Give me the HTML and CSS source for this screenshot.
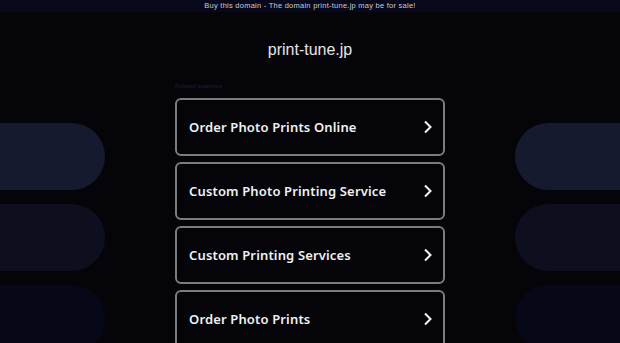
FILE: index.html
```html
<!DOCTYPE html>
<html lang="en">

<head>
    <meta charset="UTF-8">
    <meta name="viewport" content="width=device-width, initial-scale=1.0">
    <title>print-tune.jp</title>
    <link rel="stylesheet" href="styles.css">
</head>

<body>
    <div class="topbar">Buy this domain - The domain print-tune.jp may be for sale!</div>
    <div class="page">
        <div class="side left">
            <div class="pill p1"></div>
            <div class="pill p2"></div>
            <div class="pill p3"></div>
        </div>
        <div class="main">
            <h1 class="domain">print-tune.jp</h1>
            <div class="related">Related searches</div>
            <div class="links">
                <a class="link" href="#">
                    <span>Order Photo Prints Online</span>
                    <svg viewBox="0 0 10 14"><polyline points="2,1.5 7.5,7 2,12.5"></polyline></svg>
                </a>
                <a class="link" href="#">
                    <span>Custom Photo Printing Service</span>
                    <svg viewBox="0 0 10 14"><polyline points="2,1.5 7.5,7 2,12.5"></polyline></svg>
                </a>
                <a class="link" href="#">
                    <span>Custom Printing Services</span>
                    <svg viewBox="0 0 10 14"><polyline points="2,1.5 7.5,7 2,12.5"></polyline></svg>
                </a>
                <a class="link" href="#">
                    <span>Order Photo Prints</span>
                    <svg viewBox="0 0 10 14"><polyline points="2,1.5 7.5,7 2,12.5"></polyline></svg>
                </a>
            </div>
        </div>
        <div class="side right">
            <div class="pill p1"></div>
            <div class="pill p2"></div>
            <div class="pill p3"></div>
        </div>
    </div>
</body>

</html>
```

FILE: styles.css
```css
body {
    margin: 0;
    background: #050509;
    font-family: 'Liberation Sans', Arial, sans-serif;
    height: 343px;
    overflow: hidden;
}

.topbar {
    height: 12px;
    line-height: 12px;
    background: #070819;
    color: #c8cad6;
    font-size: 7.5px;
    letter-spacing: 0.25px;
    text-align: center;
}

.page {
    display: grid;
    grid-template-columns: 105px 1fr 105px;
}

.side {
    display: flex;
    flex-direction: column;
    gap: 14px;
    padding-top: 111px;
}

.pill {
    height: 67px;
    width: 105px;
}

.left .pill {
    border-radius: 0 34px 34px 0;
}

.right .pill {
    border-radius: 34px 0 0 34px;
}

.p1 {
    background: #161a2f;
}

.p2 {
    background: #0d0f1f;
}

.p3 {
    background: #060817;
}

.main {
    display: flex;
    flex-direction: column;
    align-items: center;
}

.domain {
    margin: 28px 0 0;
    font-size: 16px;
    line-height: 20px;
    font-weight: normal;
    color: #e6e6e8;
}

.related {
    width: 270px;
    margin-top: 21px;
    font-size: 6px;
    line-height: 10px;
    color: #1d1f38;
}

.links {
    display: flex;
    flex-direction: column;
    gap: 6px;
    margin-top: 7px;
}

.link {
    box-sizing: border-box;
    width: 270px;
    height: 58px;
    border: 2px solid #7c7c80;
    border-radius: 6px;
    display: flex;
    align-items: center;
    justify-content: space-between;
    padding: 0 10px 0 12px;
    text-decoration: none;
    color: #f0f0f2;
    font-family: 'Noto Sans', sans-serif;
    font-weight: 600;
    font-size: 13px;
    letter-spacing: 0.15px;
}

.link svg {
    width: 10px;
    height: 14px;
}

.link polyline {
    fill: none;
    stroke: #f4f4f6;
    stroke-width: 2;
}
```
